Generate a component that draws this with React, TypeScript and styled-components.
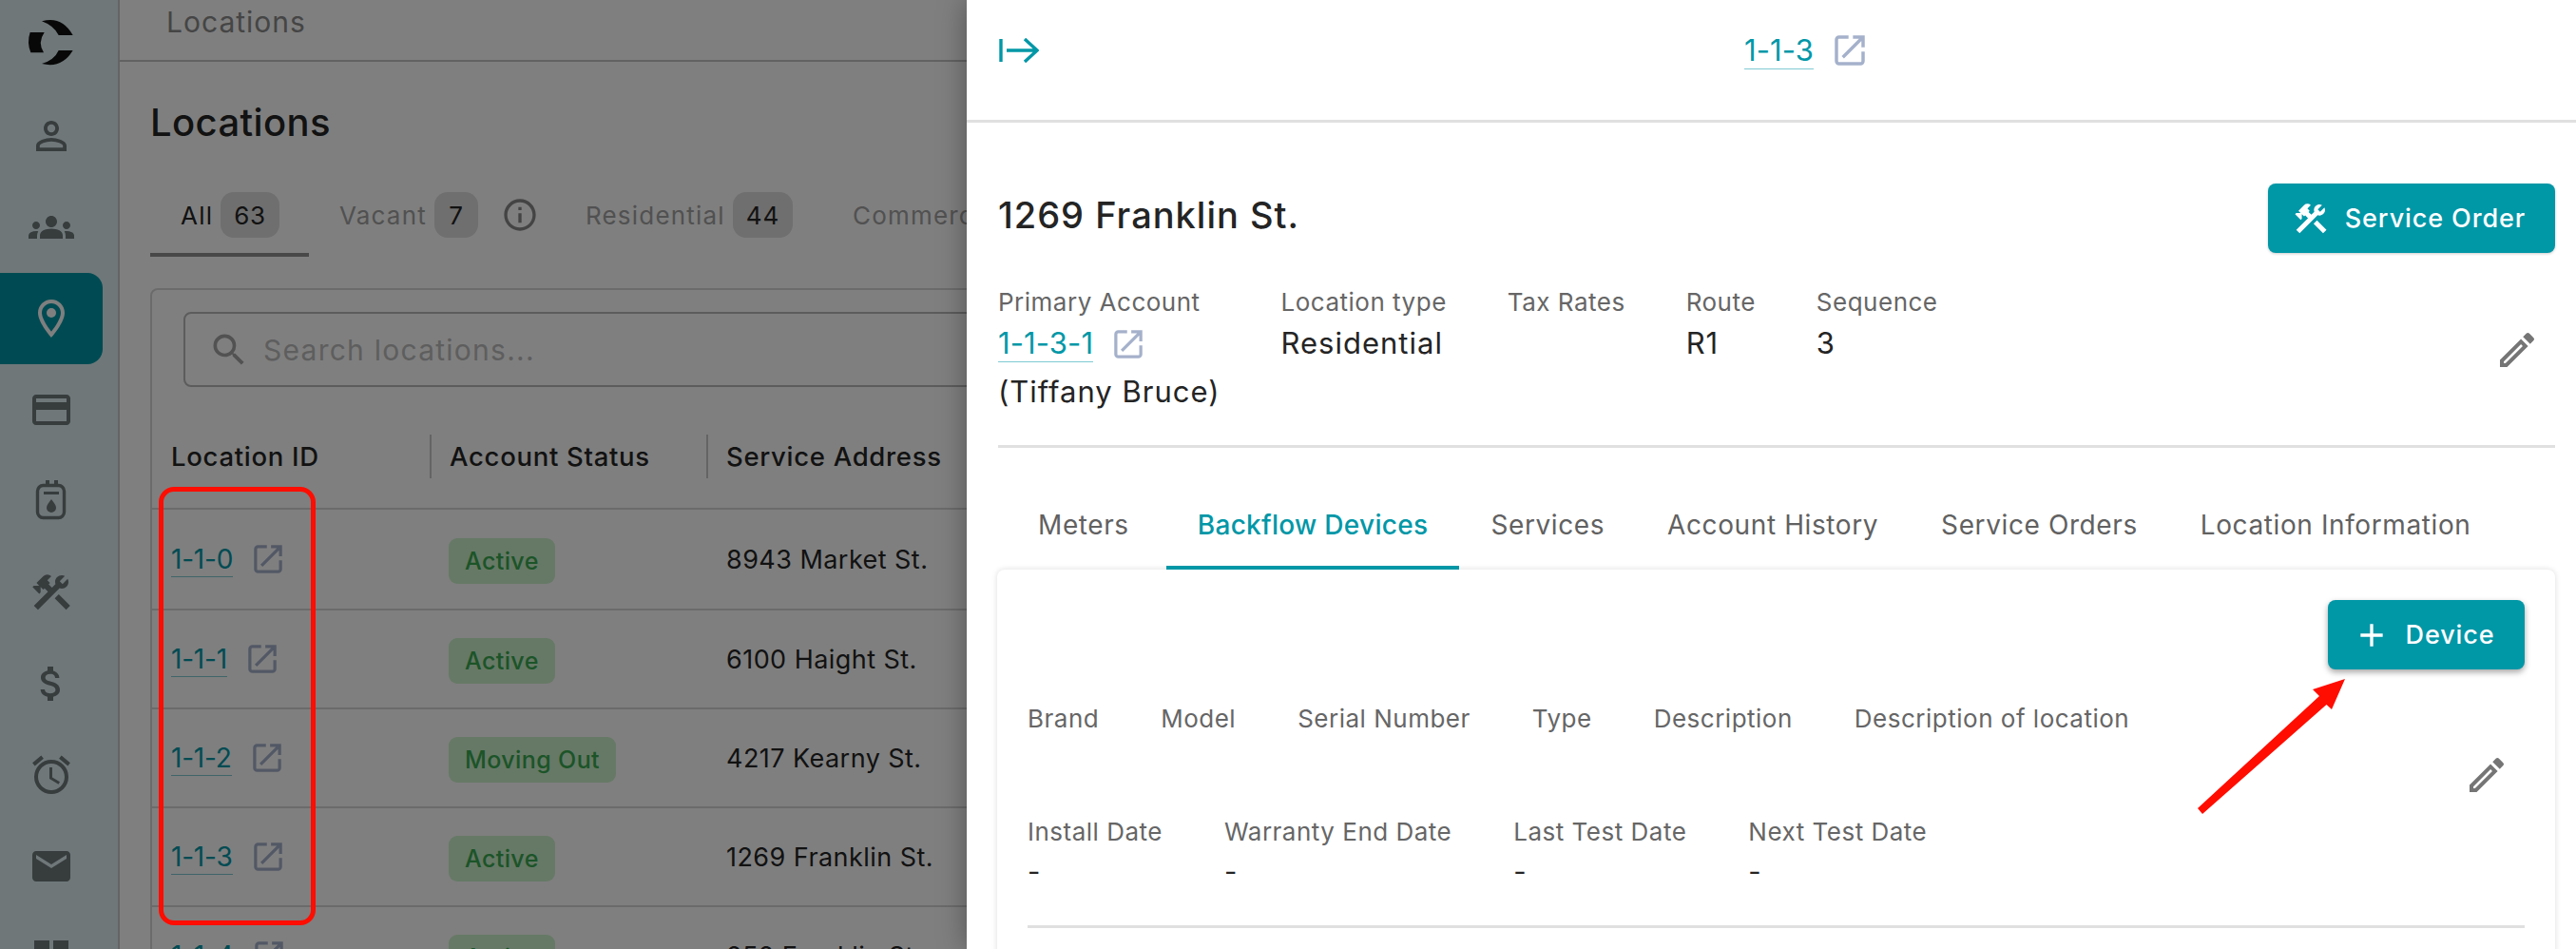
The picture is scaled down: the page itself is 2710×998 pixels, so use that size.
import React from "react";
import styled, { createGlobalStyle } from "styled-components";
import {
  MdPersonOutline,
  MdGroups,
  MdOutlineLocationOn,
  MdCreditCard,
  MdConstruction,
  MdAttachMoney,
  MdOutlineAlarm,
  MdEmail,
  MdDashboard,
  MdSearch,
  MdInfoOutline,
  MdOutlineEdit,
  MdAdd,
} from "react-icons/md";

const TEAL = "#0097a7";

const rows = [
  { id: "1-1-0", status: "Active", address: "8943 Market St." },
  { id: "1-1-1", status: "Active", address: "6100 Haight St." },
  { id: "1-1-2", status: "Moving Out", address: "4217 Kearny St." },
  { id: "1-1-3", status: "Active", address: "1269 Franklin St." },
  { id: "1-1-4", status: "Active", address: "252 Franklin St." },
];

function ExternalIcon({ size = 30 }: { size?: number }) {
  return (
    <ExtSvg width={size} height={size} viewBox="0 0 24 24" fill="none">
      <path
        d="M11 1.5H3.5a2 2 0 0 0-2 2v17a2 2 0 0 0 2 2h17a2 2 0 0 0 2-2V13"
        stroke="currentColor"
        strokeWidth="2.6"
      />
      <path d="M6.5 17.5 21.5 2.5M14.5 1.5h8V9.5" stroke="currentColor" strokeWidth="2.6" />
    </ExtSvg>
  );
}

function Logo() {
  return (
    <svg width="80" height="70" viewBox="0 0 240 210" fill="#111">
      <path d="M35 63H80Q58 95 78 127H37Q24 95 35 63Z" />
      <path d="M72 28Q135 10 170 72H125Q110 42 72 28Z" />
      <path d="M72 162Q135 178 170 120H125Q112 150 72 162Z" />
    </svg>
  );
}

function MeterIcon() {
  return (
    <svg width="48" height="48" viewBox="0 0 48 48" fill="none">
      <rect x="9.5" y="7.5" width="28" height="34" rx="6" stroke="currentColor" strokeWidth="3.4" />
      <path d="M18 2h4v5h-4zM27 2h4v5h-4zM16 14h16v3H16z" fill="currentColor" />
      <path d="M24 22c3 4 5 6 5 9a5 5 0 0 1-10 0c0-3 2-5 5-9Z" fill="currentColor" />
    </svg>
  );
}

const navItems = [
  <MdPersonOutline key="person" size={48} />,
  <MdGroups key="groups" size={48} />,
  <MdOutlineLocationOn key="pin" size={48} />,
  <MdCreditCard key="card" size={48} />,
  <MeterIcon key="meter" />,
  <MdConstruction key="tools" size={48} />,
  <MdAttachMoney key="money" size={48} />,
  <MdOutlineAlarm key="alarm" size={48} />,
  <MdEmail key="mail" size={48} />,
  <MdDashboard key="dash" size={48} />,
];

const deviceTopLabels = ["Brand", "Model", "Serial Number", "Type", "Description", "Description of location"];
const deviceDates = ["Install Date", "Warranty End Date", "Last Test Date", "Next Test Date"];
const drawerTabs = ["Meters", "Backflow Devices", "Services", "Account History", "Service Orders", "Location Information"];

export default function App() {
  return (
    <Page>
      <GlobalStyle />
      <Sidebar>
        <LogoSlot>
          <Logo />
        </LogoSlot>
        {navItems.map((icon, i) => (
          <NavItem key={i} $active={i === 2}>
            {icon}
          </NavItem>
        ))}
      </Sidebar>

      <Main>
        <TopBar>Locations</TopBar>
        <Content>
          <PageTitle>Locations</PageTitle>
          <ListTabs>
            <ListTab $active>
              All <Chip>63</Chip>
            </ListTab>
            <ListTab>
              Vacant <Chip>7</Chip>
            </ListTab>
            <InfoSlot>
              <MdInfoOutline size={40} />
            </InfoSlot>
            <ListTab>
              Residential <Chip>44</Chip>
            </ListTab>
            <ListTab>Commercial</ListTab>
          </ListTabs>
          <TableCard>
            <SearchBox>
              <MdSearch size={44} />
              <span>Search locations...</span>
            </SearchBox>
            <HeaderRow>
              <HeaderCell>Location ID</HeaderCell>
              <HeaderCell $divider>Account Status</HeaderCell>
              <HeaderCell $divider>Service Address</HeaderCell>
            </HeaderRow>
            {rows.map((row) => (
              <TableRow key={row.id}>
                <IdCell>
                  <TableLink>{row.id}</TableLink>
                  <ExternalIcon />
                </IdCell>
                <StatusCell>
                  <StatusBadge>{row.status}</StatusBadge>
                </StatusCell>
                <AddressCell>{row.address}</AddressCell>
              </TableRow>
            ))}
          </TableCard>
        </Content>
      </Main>

      <Scrim />

      <Drawer>
        <DrawerHeader>
          <svg width="42" height="26" viewBox="0 0 42 26" fill="none" stroke={TEAL} strokeWidth="3.4">
            <path d="M2 1v24M8 13h32M27 1l13 12-13 12" />
          </svg>
          <HeaderLink>
            <DrawerLink>1-1-3</DrawerLink>
            <ExternalIcon size={32} />
          </HeaderLink>
        </DrawerHeader>

        <DrawerBody>
          <TitleRow>
            <DrawerTitle>1269 Franklin St.</DrawerTitle>
            <PrimaryButton $width={302}>
              <MdConstruction size={40} />
              Service Order
            </PrimaryButton>
          </TitleRow>

          <SummaryRow>
            <Field>
              <FieldLabel>Primary Account</FieldLabel>
              <FieldValue>
                <AccountLink>
                  <DrawerLink>1-1-3-1</DrawerLink>
                  <ExternalIcon />
                </AccountLink>
                (Tiffany Bruce)
              </FieldValue>
            </Field>
            <Field>
              <FieldLabel>Location type</FieldLabel>
              <FieldValue>Residential</FieldValue>
            </Field>
            <Field>
              <FieldLabel>Tax Rates</FieldLabel>
            </Field>
            <Field>
              <FieldLabel>Route</FieldLabel>
              <FieldValue>R1</FieldValue>
            </Field>
            <Field>
              <FieldLabel>Sequence</FieldLabel>
              <FieldValue>3</FieldValue>
            </Field>
            <EditSlot $top={44} $right={16}>
              <MdOutlineEdit size={48} />
            </EditSlot>
          </SummaryRow>

          <DrawerTabs>
            {drawerTabs.map((tab) => (
              <DrawerTab key={tab} $active={tab === "Backflow Devices"}>
                {tab}
              </DrawerTab>
            ))}
          </DrawerTabs>

          <DeviceCard>
            <ButtonRow>
              <PrimaryButton $width={207} $raised>
                <MdAdd size={40} />
                Device
              </PrimaryButton>
            </ButtonRow>
            <DeviceInfo>
              <DeviceFields>
                <DeviceRow $minHeight={82}>
                  {deviceTopLabels.map((label) => (
                    <Field key={label}>
                      <FieldLabel>{label}</FieldLabel>
                    </Field>
                  ))}
                </DeviceRow>
                <DeviceRow>
                  {deviceDates.map((label) => (
                    <Field key={label}>
                      <FieldLabel>{label}</FieldLabel>
                      <DeviceValue>-</DeviceValue>
                    </Field>
                  ))}
                </DeviceRow>
              </DeviceFields>
              <EditSlot $top={53} $right={16}>
                <MdOutlineEdit size={48} />
              </EditSlot>
            </DeviceInfo>
          </DeviceCard>
        </DrawerBody>
      </Drawer>

      <RedBox />
      <RedArrow width="180" height="170" viewBox="0 0 180 170">
        <polygon points="12,150 17,156 147.5,41 153,46 167,14 133,25 140,32" fill="#ff0d00" />
      </RedArrow>
    </Page>
  );
}

const GlobalStyle = createGlobalStyle`
  html, body {
    margin: 0;
    padding: 0;
    background: #fff;
    overflow: hidden;
  }
  * {
    box-sizing: border-box;
  }
  body {
    font-family: Inter, "Liberation Sans", sans-serif;
  }
`;

const Page = styled.div`
  position: relative;
  width: 2710px;
  height: 998px;
  display: flex;
  overflow: hidden;
  color: #242424;
`;

const Sidebar = styled.aside`
  flex: 0 0 126px;
  height: 998px;
  background: #deeff2;
  border-right: 2px solid #c8c8c8;
  overflow: hidden;
`;

const LogoSlot = styled.div`
  height: 95px;
  display: flex;
  align-items: center;
  justify-content: center;
  padding-right: 4px;
`;

const NavItem = styled.div<{ $active?: boolean }>`
  width: 108px;
  height: 96px;
  display: flex;
  align-items: center;
  justify-content: center;
  border-radius: ${(p) => (p.$active ? "0 16px 16px 0" : "0")};
  background: ${(p) => (p.$active ? TEAL : "transparent")};
  color: ${(p) => (p.$active ? "#fff" : "#6e787b")};
`;

/* stops at the drawer's left edge, the rest of the list is hidden behind it */
const Main = styled.main`
  flex: 0 0 891px;
  height: 998px;
  background: #fff;
  overflow: hidden;
`;

const TopBar = styled.div`
  height: 65px;
  padding: 0 0 0 49px;
  border-bottom: 2px solid #c4c4c4;
  font-size: 30px;
  line-height: 46px;
  letter-spacing: 1px;
  color: #8a8a8a;
`;

const Content = styled.div`
  padding-left: 32px;
`;

const PageTitle = styled.h1`
  margin: 41px 0 50px 0;
  height: 46px;
  font-size: 40px;
  line-height: 46px;
  font-weight: 500;
  letter-spacing: 0.4px;
`;

const ListTabs = styled.div`
  display: flex;
  align-items: flex-start;
  height: 68px;
  margin-bottom: 33px;
`;

const ListTab = styled.div<{ $active?: boolean }>`
  display: flex;
  align-items: center;
  gap: 8px;
  height: 68px;
  padding: 0 31px 16px 32px;
  font-size: 26px;
  letter-spacing: 1.2px;
  white-space: nowrap;
  color: ${(p) => (p.$active ? "#242424" : "#a2a2a2")};
  border-bottom: 4px solid ${(p) => (p.$active ? "#909090" : "transparent")};
`;

const Chip = styled.span`
  display: inline-flex;
  align-items: center;
  justify-content: center;
  min-width: 46px;
  height: 48px;
  padding: 0 14px;
  border-radius: 14px;
  background: #dedede;
  color: #242424;
  font-size: 26px;
  letter-spacing: 0.8px;
`;

const InfoSlot = styled.div`
  height: 48px;
  margin: 0 17px 0 -7px;
  display: flex;
  align-items: center;
  color: #888;
`;

const TableCard = styled.section`
  width: 1200px;
  height: 760px;
  border: 2px solid #d6d6d6;
  border-radius: 8px 0 0 0;
  background: #fff;
`;

const SearchBox = styled.div`
  display: flex;
  align-items: center;
  gap: 14px;
  margin: 23px 0 0 33px;
  height: 79px;
  padding-left: 24px;
  border: 2px solid #b8b8b8;
  border-radius: 8px;
  font-size: 30px;
  letter-spacing: 1.25px;
  color: #bcbcbc;

  & svg {
    color: #a4a4a4;
  }
`;

const tableColumns = "292px 291px 1fr";

const HeaderRow = styled.div`
  display: grid;
  grid-template-columns: ${tableColumns};
  align-items: center;
  height: 129px;
  padding-top: 18px;
  border-bottom: 2px solid #d6d6d6;
`;

const HeaderCell = styled.div<{ $divider?: boolean }>`
  height: 46px;
  line-height: 46px;
  padding-left: ${(p) => (p.$divider ? "19px" : "20px")};
  border-left: ${(p) => (p.$divider ? "2px solid #c8c8c8" : "0")};
  font-size: 27.5px;
  font-weight: 500;
  letter-spacing: 0.7px;
`;

const TableRow = styled.div`
  display: grid;
  grid-template-columns: ${tableColumns};
  align-items: center;
  height: 104px;
  border-bottom: 2px solid #d6d6d6;

  &:nth-of-type(3) {
    height: 106px;
  }
`;

const IdCell = styled.div`
  display: flex;
  align-items: center;
  gap: 22px;
  padding-left: 20px;
  color: #aab3c8;
`;

const TableLink = styled.span`
  font-size: 28px;
  line-height: 36px;
  letter-spacing: -0.2px;
  color: ${TEAL};
  border-bottom: 1.5px solid #7fcbd3;
`;

const ExtSvg = styled.svg`
  flex: none;
  color: #a5b1cb;
`;

const StatusCell = styled.div`
  padding: 4px 0 0 20px;
`;

const StatusBadge = styled.span`
  display: inline-flex;
  align-items: center;
  height: 48px;
  padding: 0 17px;
  border-radius: 9px;
  background: #cdf2cd;
  color: #38a850;
  font-size: 25px;
  font-weight: 500;
  letter-spacing: 0.4px;
`;

const AddressCell = styled.div`
  padding-left: 21px;
  font-size: 27px;
  letter-spacing: 0.45px;
`;

const Scrim = styled.div`
  position: absolute;
  inset: 0;
  background: rgba(0, 0, 0, 0.5);
`;

const Drawer = styled.div`
  position: absolute;
  top: 0;
  right: 0;
  width: 1693px;
  height: 998px;
  background: #fff;
  box-shadow: 0 0 28px rgba(0, 0, 0, 0.35);
  overflow: hidden;
`;

const DrawerHeader = styled.header`
  display: flex;
  align-items: center;
  gap: 742px;
  height: 129px;
  padding: 0 0 20px 34px;
  border-bottom: 3px solid #e0e0e0;
`;

const HeaderLink = styled.div`
  display: flex;
  align-items: center;
  gap: 22px;
`;

const DrawerLink = styled.span`
  font-size: 31px;
  line-height: 38px;
  letter-spacing: 0.1px;
  color: ${TEAL};
  border-bottom: 1.5px solid #7fcbd3;
`;

const DrawerBody = styled.div`
  padding: 64px 22px 0 33px;
`;

const TitleRow = styled.div`
  display: flex;
  align-items: center;
  justify-content: space-between;
  height: 73px;
  margin-bottom: 34px;
`;

const DrawerTitle = styled.h2`
  margin: -8px 0 0;
  font-size: 38px;
  line-height: 46px;
  font-weight: 500;
  letter-spacing: 1px;
`;

const PrimaryButton = styled.button<{ $width: number; $raised?: boolean }>`
  display: flex;
  align-items: center;
  justify-content: center;
  gap: 16px;
  width: ${(p) => p.$width}px;
  height: 73px;
  padding: 0 6px 0 0;
  border: 0;
  border-radius: 8px;
  background: ${TEAL};
  color: #fff;
  font-family: inherit;
  font-size: 27px;
  font-weight: 500;
  letter-spacing: 0.9px;
  box-shadow: ${(p) => (p.$raised ? "0 3px 6px rgba(0,0,0,.35)" : "0 1px 3px rgba(0,0,0,.2)")};
`;

const SummaryRow = styled.div`
  position: relative;
  display: flex;
  gap: 64px;
  height: 171px;
  border-bottom: 3px solid #e0e0e0;
`;

const Field = styled.div`
  display: flex;
  flex-direction: column;
`;

const FieldLabel = styled.div`
  height: 36px;
  font-size: 26px;
  line-height: 36px;
  letter-spacing: 0.5px;
  white-space: nowrap;
  color: #666;
`;

const FieldValue = styled.div`
  font-size: 31px;
  line-height: 50px;
  letter-spacing: 1px;
  white-space: nowrap;
`;

const AccountLink = styled.div`
  display: flex;
  align-items: center;
  gap: 22px;
  height: 51px;
`;

const EditSlot = styled.div<{ $top: number; $right: number }>`
  margin: ${(p) => p.$top}px ${(p) => p.$right}px 0 auto;
  height: 48px;
  color: #757575;
`;

const DrawerTabs = styled.nav`
  display: flex;
  margin: 61px 0 0 9px;
`;

const DrawerTab = styled.div<{ $active?: boolean }>`
  margin-left: ${(p) => (p.$active ? "6px" : "0")};
  padding: 0 33px 23px;
  font-size: 28px;
  line-height: 40px;
  white-space: nowrap;
  letter-spacing: ${(p) => (p.$active ? "0.3px" : "0.6px")};
  color: ${(p) => (p.$active ? TEAL : "#616161")};
  font-weight: ${(p) => (p.$active ? 500 : 400)};
  border-bottom: 4px solid ${(p) => (p.$active ? TEAL : "transparent")};
`;

const DeviceCard = styled.section`
  margin-left: -1px;
  height: 420px;
  padding: 32px 32px 0;
  border-radius: 8px;
  background: #fff;
  box-shadow: 0 0 6px rgba(0, 0, 0, 0.14);
`;

const ButtonRow = styled.div`
  display: flex;
  justify-content: flex-end;
  margin-bottom: 34px;
`;

const DeviceInfo = styled.div`
  display: flex;
  height: 238px;
  border-bottom: 3px solid #e0e0e0;
`;

const DeviceFields = styled.div`
  display: flex;
  flex-direction: column;
  gap: 37px;
`;

const DeviceRow = styled.div<{ $minHeight?: number }>`
  display: flex;
  gap: 65px;
  min-height: ${(p) => p.$minHeight ?? 0}px;
`;

const DeviceValue = styled.div`
  font-size: 29px;
  line-height: 48px;
`;

const RedBox = styled.div`
  position: absolute;
  left: 167px;
  top: 512px;
  width: 165px;
  height: 461px;
  border: 5px solid #ff0d00;
  border-radius: 16px;
`;

const RedArrow = styled.svg`
  position: absolute;
  left: 2300px;
  top: 700px;
`;
